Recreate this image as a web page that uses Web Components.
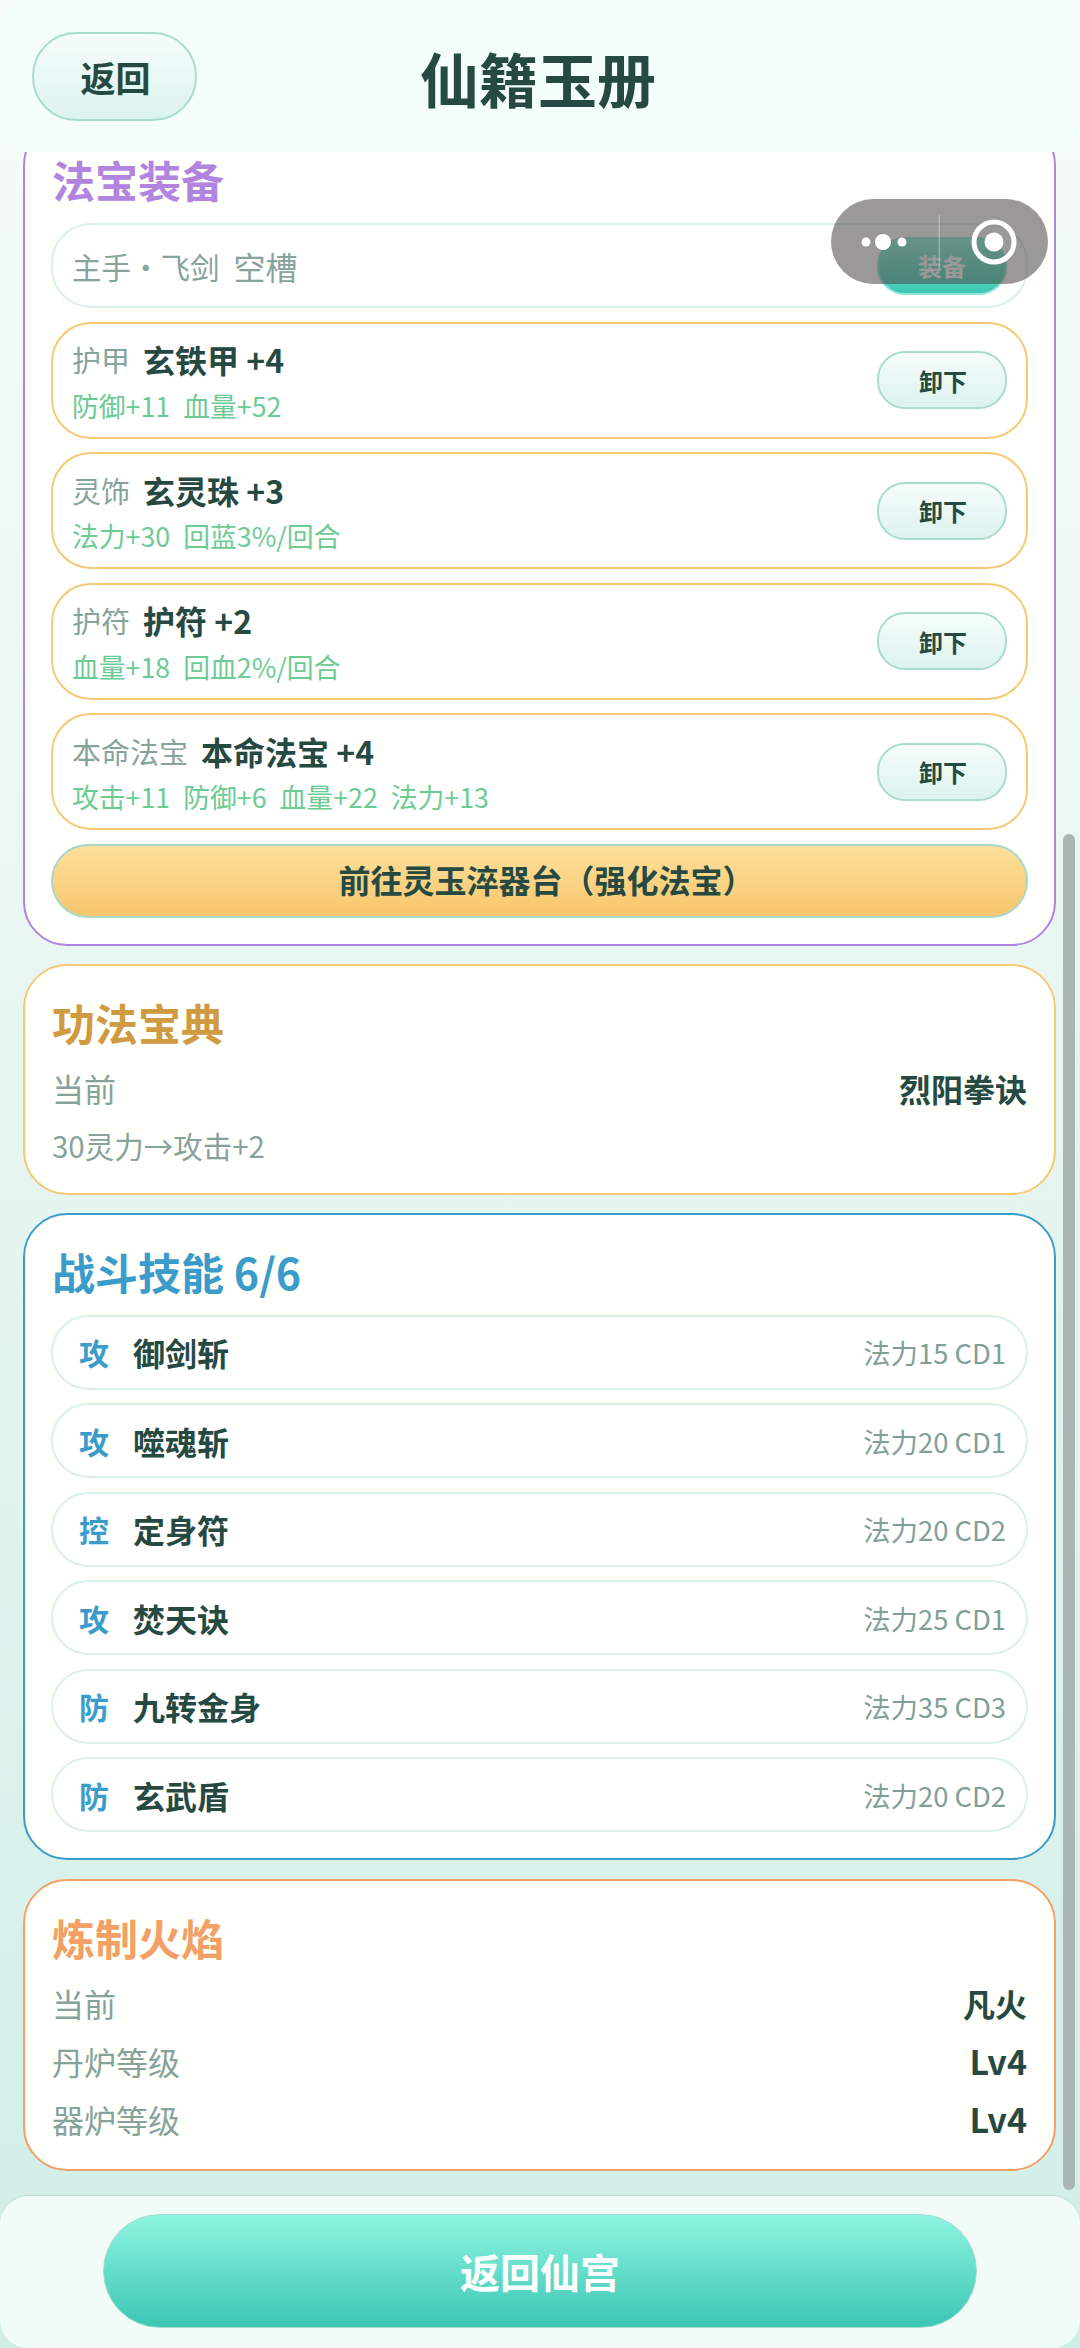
<!DOCTYPE html>
<html lang="zh">
<head>
<meta charset="utf-8">
<title>仙籍玉册</title>
<style>
  html, body { margin: 0; padding: 0; }
  body { font-family: "Noto Sans CJK SC", "Noto Sans", sans-serif; color: #264a42; }
</style>
</head>
<body>

<xian-app>
  <top-bar slot="top" heading="仙籍玉册"></top-bar>

  <jade-panel tone="#b184e0" line="#b184e0" style="margin-top:-31px">
    <span slot="title">法宝装备</span>
    <gear-row kind="主手・飞剑" name="空槽" empty action="装备"></gear-row>
    <gear-row kind="护甲" name="玄铁甲 +4" action="卸下">
      <span>防御+11</span><span>血量+52</span>
    </gear-row>
    <gear-row kind="灵饰" name="玄灵珠 +3" action="卸下">
      <span>法力+30</span><span>回蓝3%/回合</span>
    </gear-row>
    <gear-row kind="护符" name="护符 +2" action="卸下">
      <span>血量+18</span><span>回血2%/回合</span>
    </gear-row>
    <gear-row kind="本命法宝" name="本命法宝 +4" action="卸下">
      <span>攻击+11</span><span>防御+6</span><span>血量+22</span><span>法力+13</span>
    </gear-row>
    <jade-button variant="gold">前往灵玉淬器台（强化法宝）</jade-button>
  </jade-panel>

  <jade-panel tone="#d09a42" line="#f5c877" compact>
    <span slot="title">功法宝典</span>
    <stat-row label="当前" value="烈阳拳诀"></stat-row>
    <stat-row label="30灵力→攻击+2" short></stat-row>
  </jade-panel>

  <jade-panel tone="#3b9ccb" line="#3b9ccb">
    <span slot="title">战斗技能 6/6</span>
    <skill-row type="攻" name="御剑斩" cost="法力15 CD1"></skill-row>
    <skill-row type="攻" name="噬魂斩" cost="法力20 CD1"></skill-row>
    <skill-row type="控" name="定身符" cost="法力20 CD2"></skill-row>
    <skill-row type="攻" name="焚天诀" cost="法力25 CD1"></skill-row>
    <skill-row type="防" name="九转金身" cost="法力35 CD3"></skill-row>
    <skill-row type="防" name="玄武盾" cost="法力20 CD2"></skill-row>
  </jade-panel>

  <jade-panel tone="#f2a066" line="#f2a066" compact>
    <span slot="title">炼制火焰</span>
    <stat-row label="当前" value="凡火"></stat-row>
    <stat-row label="丹炉等级" value="Lv4" latin></stat-row>
    <stat-row label="器炉等级" value="Lv4" latin></stat-row>
  </jade-panel>

  <bottom-bar slot="bottom">返回仙宫</bottom-bar>
  <wx-capsule slot="over"></wx-capsule>
</xian-app>

<script>
const appTemplate = document.createElement('template');
appTemplate.innerHTML = `
  <style>
    :host {
      display: flex;
      flex-direction: column;
      position: relative;
      width: 1080px;
      height: 2348px;
      overflow: hidden;
      background: linear-gradient(180deg, #f6fcfa 0%, #e6f5f0 50%, #d0efe7 100%);
    }
    .scroll {
      flex: 1;
      min-height: 0;
      overflow: hidden;
      display: flex;
      flex-direction: column;
      gap: 18.2px;
      padding: 0 24px 0 23px;
    }
    /* overlay scrollbar, the list is scrolled down a bit */
    .thumb {
      position: absolute;
      left: 1063px;
      top: 834px;
      width: 12px;
      height: 1356px;
      border-radius: 6px;
      background: #a9b6b3;
    }
    .scroll ::slotted(*) { flex: none; }
  </style>
  <slot name="top"></slot>
  <div class="scroll"><slot></slot></div>
  <slot name="bottom"></slot>
  <div class="thumb"></div>
  <slot name="over"></slot>
`;

class XianApp extends HTMLElement {
  constructor() {
    super();
    this.attachShadow({ mode: 'open' }).appendChild(appTemplate.content.cloneNode(true));
  }
}

const barTemplate = document.createElement('template');
barTemplate.innerHTML = `
  <style>
    :host {
      display: flex;
      align-items: center;
      position: relative;
      flex: none;
      height: 152px;
      box-sizing: border-box;
      padding: 0 32px;
      background: #f3fdf9;
      border-radius: 28px;
    }
    h1 {
      position: absolute;
      left: 0;
      right: 4px;
      top: 42px;
      margin: 0;
      text-align: center;
      font-size: 59px;
      line-height: 72px;
      font-weight: 700;
      color: #264a42;
    }
    jade-button { position: relative; z-index: 1; }
  </style>
  <jade-button variant="back">返回</jade-button>
  <h1></h1>
`;

class TopBar extends HTMLElement {
  constructor() {
    super();
    this.attachShadow({ mode: 'open' }).appendChild(barTemplate.content.cloneNode(true));
    this.shadowRoot.querySelector('h1').textContent = this.getAttribute('heading');
  }
}

const bottomTemplate = document.createElement('template');
bottomTemplate.innerHTML = `
  <style>
    :host {
      display: flex;
      justify-content: center;
      flex: none;
      height: 152px;
      box-sizing: border-box;
      padding-top: 18px;
      background: #f1fcf8;
      border-radius: 28px;
      box-shadow: 0 -1px 0 #b9dcd3;
    }
  </style>
  <jade-button variant="main"><slot></slot></jade-button>
`;

class BottomBar extends HTMLElement {
  constructor() {
    super();
    this.attachShadow({ mode: 'open' }).appendChild(bottomTemplate.content.cloneNode(true));
  }
}

const buttonTemplate = document.createElement('template');
buttonTemplate.innerHTML = `
  <style>
    :host {
      display: flex;
      align-items: center;
      justify-content: center;
      flex: none;
      box-sizing: border-box;
      font-weight: 700;
      white-space: nowrap;
      border-style: solid;
      border-width: 2px;
      color: #264a42;
    }
    :host([variant=back]) {
      width: 165px; height: 89px; border-radius: 44px;
      font-size: 35px;
      padding-left: 2px;
      border-color: #a9dbcf;
      background: linear-gradient(180deg, #f6fdfb 0%, #dcf3ee 100%);
    }
    :host([variant=small]) {
      width: 130px; height: 58px; border-radius: 28px;
      font-size: 24px;
      padding-left: 2px;
      border-color: #a9dbcf;
      background: linear-gradient(180deg, #f6fdfb 0%, #dcf3ee 100%);
    }
    :host([variant=teal]) {
      width: 130px; height: 58px; border-radius: 28px;
      font-size: 24px;
      color: #fff;
      border-color: #8fe5d4;
      background: linear-gradient(180deg, #8cf0dd 0%, #3dc7b4 100%);
    }
    :host([variant=gold]) {
      height: 74px; border-radius: 37px;
      font-size: 32px;
      padding: 0 0 3px 14px;
      border-color: #a9d9c6;
      background: linear-gradient(180deg, #fde09c 0%, #f8c66c 100%);
    }
    :host([variant=main]) {
      width: 874px; height: 114px; border-radius: 57px;
      font-size: 40px;
      color: #fff;
      border-width: 1px;
      border-color: #a6dcd0;
      background: linear-gradient(180deg, #8ef5e0 0%, #3cc6b4 100%);
    }
  </style>
  <slot></slot>
`;

class JadeButton extends HTMLElement {
  constructor() {
    super();
    this.attachShadow({ mode: 'open' }).appendChild(buttonTemplate.content.cloneNode(true));
  }
}

const panelTemplate = document.createElement('template');
panelTemplate.innerHTML = `
  <style>
    :host {
      display: flex;
      flex-direction: column;
      box-sizing: border-box;
      padding: 28px 26px 26px;
      background: #fffffb;
      border: 2px solid var(--line);
      border-radius: 44px;
    }
    :host([compact]) { padding-bottom: 20px; }
    .title {
      font-size: 43px;
      line-height: 56px;
      font-weight: 700;
      color: var(--tone);
      margin-bottom: 16px;
      padding-left: 1px;
    }
    :host([compact]) .title { margin-bottom: 10px; }
    .body { display: flex; flex-direction: column; gap: 13.5px; }
    :host([compact]) .body { gap: 0; padding: 0 1px; }
  </style>
  <div class="title"><slot name="title"></slot></div>
  <div class="body"><slot></slot></div>
`;

class JadePanel extends HTMLElement {
  constructor() {
    super();
    this.attachShadow({ mode: 'open' }).appendChild(panelTemplate.content.cloneNode(true));
  }

  connectedCallback() {
    this.style.setProperty('--tone', this.getAttribute('tone'));
    this.style.setProperty('--line', this.getAttribute('line'));
  }
}

const gearTemplate = document.createElement('template');
gearTemplate.innerHTML = `
  <style>
    :host {
      display: flex;
      align-items: center;
      justify-content: space-between;
      height: 117px;
      box-sizing: border-box;
      padding: 0 19px;
      background: #fff;
      border: 2px solid #f5c877;
      border-radius: 40px;
    }
    :host([empty]) { height: 85px; border-color: #dcefe9; }
    .info { display: flex; flex-direction: column; }
    .head { display: flex; align-items: center; height: 46px; margin-top: 3px; }
    :host([empty]) .head { margin-top: 0; }
    .kind { font-size: 29px; color: #86a39b; margin-right: 13px; }
    .name { font-size: 32px; font-weight: 700; color: #264a42; }
    :host([empty]) .kind { font-size: 29.5px; margin-right: 14px; }
    :host([empty]) .name { font-weight: 400; color: #86a39b; }
    .effects { display: flex; gap: 13px; height: 44px; align-items: center; font-size: 26.8px; color: #6ccb93; margin-top: 1px; }
    :host([empty]) .effects { display: none; }
  </style>
  <div class="info">
    <div class="head"><span class="kind"></span><span class="name"></span></div>
    <div class="effects"><slot></slot></div>
  </div>
  <jade-button></jade-button>
`;

class GearRow extends HTMLElement {
  constructor() {
    super();
    this.attachShadow({ mode: 'open' }).appendChild(gearTemplate.content.cloneNode(true));
    const root = this.shadowRoot;
    root.querySelector('.kind').textContent = this.getAttribute('kind');
    root.querySelector('.name').textContent = this.getAttribute('name');
    const btn = root.querySelector('jade-button');
    btn.textContent = this.getAttribute('action');
    btn.setAttribute('variant', this.hasAttribute('empty') ? 'teal' : 'small');
  }
}

const skillTemplate = document.createElement('template');
skillTemplate.innerHTML = `
  <style>
    :host {
      display: flex;
      align-items: center;
      height: 75px;
      box-sizing: border-box;
      padding: 0 20px 0 26px;
      background: #fff;
      border: 2px solid #dcefe9;
      border-radius: 38px;
    }
    .type { width: 54px; font-size: 30px; font-weight: 700; color: #3b9ccb; }
    .name { flex: 1; font-size: 32px; font-weight: 700; color: #264a42; }
    .cost { font-size: 27.4px; color: #7f9f98; }
  </style>
  <span class="type"></span><span class="name"></span><span class="cost"></span>
`;

class SkillRow extends HTMLElement {
  constructor() {
    super();
    this.attachShadow({ mode: 'open' }).appendChild(skillTemplate.content.cloneNode(true));
    for (const key of ['type', 'name', 'cost']) {
      this.shadowRoot.querySelector('.' + key).textContent = this.getAttribute(key);
    }
  }
}

const statTemplate = document.createElement('template');
statTemplate.innerHTML = `
  <style>
    :host {
      display: flex;
      align-items: center;
      justify-content: space-between;
      height: 58px;
      font-size: 32px;
      margin-top: -1px;
      margin-bottom: 1px;
    }
    :host([short]) { height: 54px; font-size: 29.5px; margin-top: 0; }
    .label { color: #86a39b; }
    .value { font-weight: 700; color: #264a42; }
    :host([latin]) .value { font-size: 34px; }
  </style>
  <span class="label"></span><span class="value"></span>
`;

class StatRow extends HTMLElement {
  constructor() {
    super();
    this.attachShadow({ mode: 'open' }).appendChild(statTemplate.content.cloneNode(true));
    this.shadowRoot.querySelector('.label').textContent = this.getAttribute('label');
    this.shadowRoot.querySelector('.value').textContent = this.getAttribute('value') || '';
  }
}

const capsuleTemplate = document.createElement('template');
capsuleTemplate.innerHTML = `
  <style>
    :host {
      position: absolute;
      left: 831px;
      top: 199px;
      width: 217px;
      height: 85px;
      border-radius: 43px;
      background: rgba(72, 70, 66, 0.55);
    }
    svg { display: block; }
  </style>
  <svg width="217" height="85" viewBox="0 0 217 85">
    <circle cx="35" cy="43" r="4.5" fill="#fff"/>
    <circle cx="52" cy="43" r="8" fill="#fff"/>
    <circle cx="71" cy="43" r="4.5" fill="#fff"/>
    <rect x="107.5" y="16" width="1.5" height="54" fill="rgba(255,255,255,.3)"/>
    <circle cx="163" cy="43" r="20" fill="none" stroke="#fff" stroke-width="5"/>
    <circle cx="163" cy="43" r="9.5" fill="#fff"/>
  </svg>
`;

class WxCapsule extends HTMLElement {
  constructor() {
    super();
    this.attachShadow({ mode: 'open' }).appendChild(capsuleTemplate.content.cloneNode(true));
  }
}

customElements.define('jade-button', JadeButton);
customElements.define('top-bar', TopBar);
customElements.define('bottom-bar', BottomBar);
customElements.define('jade-panel', JadePanel);
customElements.define('gear-row', GearRow);
customElements.define('skill-row', SkillRow);
customElements.define('stat-row', StatRow);
customElements.define('wx-capsule', WxCapsule);
customElements.define('xian-app', XianApp);
</script>
</body>
</html>
